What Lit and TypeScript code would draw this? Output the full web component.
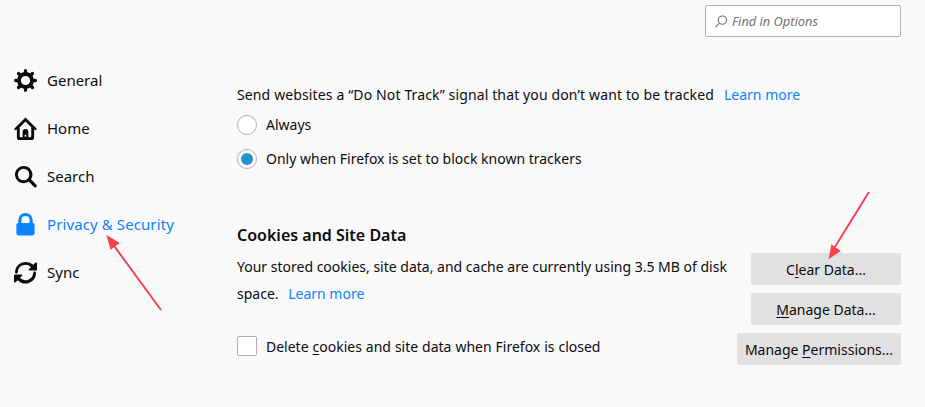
import { LitElement, html, css, svg } from 'lit';
import { customElement } from 'lit/decorators.js';

const icons: Record<string, unknown> = {
  General: svg`
    <circle cx="12" cy="12" r="6.800" fill="none" stroke="currentColor" stroke-width="4"></circle>
    <g stroke="currentColor" stroke-width="3.400" stroke-linecap="round">
      <path d="M12 1.700v3M12 19.300v3M1.700 12h3M19.300 12h3M4.700 4.700l2.100 2.100M17.200 17.200l2.100 2.100M4.700 19.300l2.100-2.100M17.200 6.800l2.100-2.100"></path>
    </g>`,
  Home: svg`
    <path fill-rule="evenodd" d="M12 .5.700 11.700c-1 1.100.6 2.700 1.700 1.700l.6-.6V21a3 3 0 0 0 3 3h12a3 3 0 0 0 3-3v-8.200l.6.6c1.100 1 2.700-.6 1.700-1.700zM12 4.800l6 5.900V20a1 1 0 0 1-1 1H7a1 1 0 0 1-1-1v-9.300z"></path>
    <path fill-rule="evenodd" d="M9 22v-6.500a3 3 0 0 1 6 0V22zM11.200 18.500v2h1.600v-2z"></path>`,
  Search: svg`<path fill-rule="evenodd" d="M10 1a9 9 0 1 0 5.300 16.300l5.600 5.600a1.700 1.700 0 0 0 2.400-2.400l-5.600-5.600A9 9 0 0 0 10 1zm0 3a6 6 0 1 1 0 12 6 6 0 0 1 0-12z"/>`,
  'Privacy & Security': svg`<path fill-rule="evenodd" d="M12 0a7.500 7.500 0 0 0-7.500 7.500v3h-.2A1.800 1.800 0 0 0 2.500 12.300V21a2.500 2.500 0 0 0 2.500 2.500h14a2.500 2.500 0 0 0 2.500-2.500v-8.700a1.800 1.800 0 0 0-1.800-1.800h-.2v-3A7.500 7.500 0 0 0 12 0zm0 3.200a4.300 4.300 0 0 1 4.300 4.300v3H7.700v-3A4.300 4.300 0 0 1 12 3.200z"/>`,
  Sync: svg`<path d="M12 1a11 11 0 0 0-11 10.500 1.500 1.500 0 0 0 3 .2A8 8 0 0 1 17.800 6.500L15.500 8.500c-.6.6-.2 1.500.6 1.500H23c.6 0 1-.4 1-1V2.500c0-.9-1-1.300-1.600-.7L20 4a11 11 0 0 0-8-3zM21.500 11a1.500 1.500 0 0 0-1.500 1.300A8 8 0 0 1 6.200 17.500l2.300-2c.6-.6.200-1.500-.6-1.500H1c-.6 0-1 .4-1 1v6.500c0 .9 1 1.300 1.600.7L4 20a11 11 0 0 0 19-7.500 1.500 1.500 0 0 0-1.500-1.500z"/>`,
};

const navItems = ['General', 'Home', 'Search', 'Privacy & Security', 'Sync'];

@customElement('app-root')
export class AppRoot extends LitElement {
  static styles = css`
    :host {
      display: block;
      height: 407px;
      overflow: hidden;
      position: relative;
      background: #f9f9fa;
      color: #0c0c0d;
      font-family: 'Noto Sans', 'Open Sans', sans-serif;
      font-size: 14px;
    }

    .layout {
      display: grid;
      grid-template-columns: 237px 664px;
      height: 100%;
    }

    .nav {
      display: flex;
      flex-direction: column;
      padding: 56px 0 0 14px;
    }

    .nav-item {
      display: flex;
      align-items: center;
      gap: 10px;
      height: 48px;
      font-size: 15px;
      color: #0c0c0d;
    }

    .nav-item svg {
      width: 23px;
      height: 23px;
      flex: none;
      fill: currentColor;
    }

    .nav-item.active {
      color: #0a84ff;
      letter-spacing: 0.1px;
    }

    .main {
      display: flex;
      flex-direction: column;
    }

    .search-row {
      display: flex;
      justify-content: flex-end;
      padding-top: 5px;
      height: 82px;
      box-sizing: border-box;
    }

    .search {
      display: flex;
      align-items: center;
      gap: 5px;
      width: 196px;
      height: 32px;
      box-sizing: border-box;
      padding-left: 9px;
      background: #fff;
      border: 1px solid #b1b1b3;
      border-radius: 2px;
      color: #737373;
      font-style: italic;
      font-size: 12.8px;
    }

    .search svg {
      width: 12px;
      height: 13px;
      fill: none;
      stroke: #737373;
      stroke-width: 1.200;
    }

    .line {
      display: flex;
      align-items: center;
      height: 24px;
      white-space: nowrap;
    }

    .dnt {
      letter-spacing: 0.13px;
    }

    .link {
      color: #0a84ff;
      margin-left: 10px;
    }

    .options {
      display: flex;
      flex-direction: column;
      gap: 1px;
      margin-top: 2px;
    }

    .option {
      display: flex;
      align-items: center;
      gap: 9px;
      height: 33px;
      white-space: nowrap;
    }

    .radio {
      width: 20px;
      height: 20px;
      box-sizing: border-box;
      flex: none;
      border: 1px solid #b1b1b3;
      border-radius: 50%;
      background: #fff;
      display: flex;
      align-items: center;
      justify-content: center;
    }

    .radio i {
      width: 12px;
      height: 12px;
      border-radius: 50%;
      background: #2292d0;
    }

    .cookies {
      display: grid;
      grid-template-columns: minmax(0, 1fr) auto;
      margin-top: 47px;
    }

    h2 {
      margin: 0 0 5px;
      height: 26px;
      line-height: 26px;
      font-size: 16px;
      font-weight: 600;
      grid-column: 1 / 3;
    }

    .desc {
      line-height: 27px;
      white-space: nowrap;
    }

    .desc .link {
      margin-left: 6px;
    }

    .check-row {
      display: flex;
      align-items: center;
      gap: 9px;
      margin-top: 29px;
      height: 20px;
      white-space: nowrap;
      word-spacing: 0.3px;
    }

    .check {
      width: 20px;
      height: 20px;
      box-sizing: border-box;
      background: #fff;
      border: 1px solid #b1b1b3;
      border-radius: 2px;
      flex: none;
    }

    .buttons {
      display: flex;
      flex-direction: column;
      align-items: flex-end;
      gap: 8px;
    }

    .btn {
      height: 32px;
      display: flex;
      align-items: center;
      justify-content: center;
      background: #e1e1e2;
      border-radius: 2px;
      color: #0c0c0d;
      white-space: nowrap;
    }

    .btn.wide {
      width: 150px;
    }

    .btn.widest {
      width: 164px;
    }

    u {
      text-underline-offset: 2px;
    }

    .arrow {
      position: absolute;
      left: 0;
      top: 0;
      width: 925px;
      height: 407px;
      pointer-events: none;
    }
  `;

  render() {
    return html`
      <div class="layout">
        <nav class="nav">
          ${navItems.map(
            (name) => html`
              <div class="nav-item ${name === 'Privacy & Security' ? 'active' : ''}">
                <svg viewBox="0 0 24 24">${icons[name]}</svg>
                <span>${name}</span>
              </div>
            `
          )}
        </nav>
        <main class="main">
          <div class="search-row">
            <div class="search">
              <svg viewBox="1.500 1 13 14">
                <circle cx="9.500" cy="6.500" r="4.500"></circle>
                <path d="M6.300 9.700 2 14"></path>
              </svg>
              <span>Find in Options</span>
            </div>
          </div>
          <section class="tracking">
            <div class="line">
              <span class="dnt">Send websites a “Do Not Track” signal that you don’t want to be tracked</span>
              <span class="link">Learn more</span>
            </div>
            <div class="options">
              <div class="option"><span class="radio"></span><span>Always</span></div>
              <div class="option"><span class="radio"><i></i></span><span>Only when Firefox is set to block known trackers</span></div>
            </div>
          </section>
          <section class="cookies">
            <h2>Cookies and Site Data</h2>
            <div>
              <div class="desc">Your stored cookies, site data, and cache are currently using 3.5 MB of disk</div>
              <div class="desc"><span>space.</span> <span class="link">Learn more</span></div>
              <div class="check-row">
                <span class="check"></span>
                <span>Delete <u>c</u>ookies and site data when Firefox is closed</span>
              </div>
            </div>
            <div class="buttons">
              <div class="btn wide"><span>C<u>l</u>ear Data...</span></div>
              <div class="btn wide"><span><u>M</u>anage Data...</span></div>
              <div class="btn widest"><span>Manage <u>P</u>ermissions...</span></div>
            </div>
          </section>
        </main>
      </div>
      <svg class="arrow" viewBox="0 0 925 407">
        <g stroke="#f5434f" stroke-width="2" fill="#f5434f">
          <path d="M161 310 112 243" fill="none"></path>
          <path d="M108 237 118 243 111 248z"></path>
          <path d="M869 192 833 250" fill="none"></path>
          <path d="M830 257 832 246 839 251z"></path>
        </g>
      </svg>
    `;
  }
}
